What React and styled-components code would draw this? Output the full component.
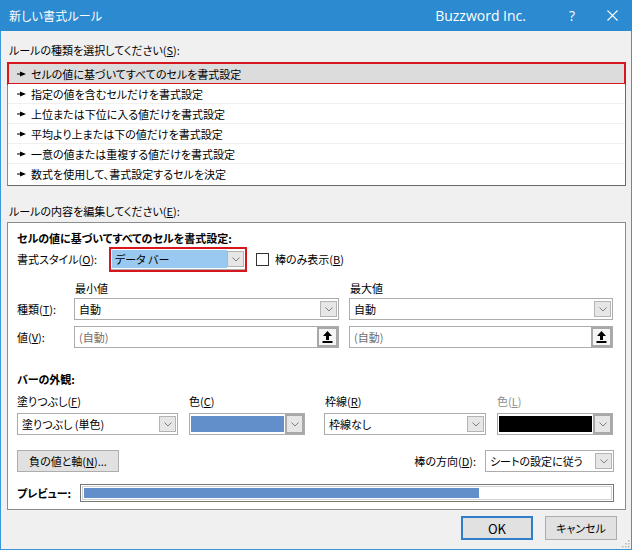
import styled, { createGlobalStyle } from "styled-components";

const GlobalStyle = createGlobalStyle`
  body {
    margin: 0;
    background: #ffffff;
  }
  * {
    box-sizing: border-box;
  }
`;

const Window = styled.div`
  position: relative;
  width: 632px;
  height: 550px;
  display: flex;
  flex-direction: column;
  background: #f0f0f0;
  font-family: "Noto Sans CJK JP", "Noto Sans", sans-serif;
  font-size: 11px;
  font-feature-settings: "palt";
  color: #000;
`;

const TitleBar = styled.div`
  height: 31px;
  flex: none;
  display: flex;
  align-items: center;
  padding-left: 9px;
  background: #2b8ad0;
  color: #fff;
`;

const TitleText = styled.span`
  flex: 1;
  font-size: 12px;
  letter-spacing: 0.2px;
`;

const Brand = styled.span`
  font-family: "Open Sans", "Noto Sans", sans-serif;
  font-size: 14px;
  margin-right: 26px;
`;

const TitleButton = styled.span`
  width: 40px;
  height: 31px;
  display: flex;
  align-items: center;
  justify-content: center;
  font-family: "Open Sans", sans-serif;
  font-size: 14px;
`;

const Body = styled.div`
  flex: 1;
  display: flex;
  flex-direction: column;
  border: 1px solid #3a96d8;
  border-top: none;
  padding: 0 5px 0 6px;
`;

const SectionLabel = styled.div`
  margin-top: ${(p) => p.$mt}px;
  padding-left: 2px;
  line-height: 16px;
`;

const ListBox = styled.div`
  margin-top: 4px;
  padding: 1px 0;
  background: #fff;
  border: 1px solid #8a8a8a;
  border-right-color: #6a6a6a;
  border-bottom-color: #6a6a6a;
`;

const ListItem = styled.div`
  position: relative;
  height: 20px;
  display: flex;
  align-items: center;
  padding-left: 9px;
  background: ${(p) => (p.$selected ? "#dcdcdc" : "#fff")};
  border-bottom: 1px solid #f0f0f0;
  &:last-child {
    border-bottom: none;
  }
  ${(p) =>
    p.$selected &&
    `
    &::after {
      content: "";
      position: absolute;
      left: -1px;
      right: -1px;
      top: -2px;
      bottom: -2px;
      border: 2px solid #d7161e;
    }
  `}
`;

const Pointer = styled.svg`
  width: 9px;
  height: 6px;
  margin-right: 5px;
  flex: none;
`;

const Frame = styled.div`
  margin-top: 3px;
  display: flex;
  flex-direction: column;
  background: #fff;
  border: 1px solid #8c8c8c;
  padding: 7px 11px 7px 9px;
`;

const Heading = styled.div`
  font-weight: bold;
  line-height: 16px;
  margin-top: ${(p) => p.$mt || 0}px;
`;

const Row = styled.div`
  display: flex;
  align-items: center;
  margin-top: ${(p) => p.$mt || 0}px;
`;

const Label = styled.span`
  width: ${(p) => (p.$w ? `${p.$w}px` : "auto")};
  flex: none;
  line-height: 16px;
  padding-left: ${(p) => p.$pl || 0}px;
  color: ${(p) => (p.$disabled ? "#8d8d8d" : "#000")};
  font-weight: ${(p) => (p.$bold ? "bold" : "normal")};
`;

const Combo = styled.div`
  position: relative;
  width: ${(p) => p.$w}px;
  height: 22px;
  flex: none;
  display: flex;
  align-items: stretch;
  margin-left: ${(p) => p.$ml || 0}px;
  padding: 1px;
  background: #fff;
  border: 1px solid #acacac;
  ${(p) =>
    p.$marked &&
    `
    &::after {
      content: "";
      position: absolute;
      left: -2px;
      right: -2px;
      top: -2px;
      bottom: -3px;
      border: 2px solid #d7161e;
    }
  `}
`;

const ComboText = styled.span`
  flex: 1;
  display: flex;
  align-items: center;
  padding-left: 3px;
  background: ${(p) => (p.$highlight ? "#99c9f0" : "transparent")};
  color: ${(p) => (p.$placeholder ? "#6d6d6d" : "#000")};
`;

const Swatch = styled.span`
  flex: 1;
  margin: 1px 1px 1px 0;
  background: ${(p) => p.$color};
`;

const DropButton = styled.span`
  width: 17px;
  flex: none;
  display: flex;
  align-items: center;
  justify-content: center;
  margin: 1px 0;
  background: #e6e6e6;
  border: 1px solid #b4b4b4;
`;

const ColorDrop = styled(DropButton)`
  width: 19px;
  margin: -1px -1px -1px 0;
  border: 2px solid #a8a8a8;
`;

const RefButton = styled.span`
  width: 21px;
  flex: none;
  display: flex;
  align-items: center;
  justify-content: center;
  margin: -1px -1px -1px 0;
  background: #f6f6f6;
  border: 2px solid #a8a8a8;
`;

const CheckBox = styled.span`
  width: 13px;
  height: 13px;
  flex: none;
  margin-left: 10px;
  margin-right: 6px;
  background: #fff;
  border: 1px solid #333;
`;

const Field = styled.div`
  width: ${(p) => p.$w}px;
  margin-left: ${(p) => p.$ml || 0}px;
  flex: none;
  display: flex;
  flex-direction: column;
  gap: 4px;
`;

const PushButton = styled.button`
  width: ${(p) => p.$w}px;
  height: ${(p) => p.$h}px;
  padding: 0;
  font: inherit;
  font-size: ${(p) => (p.$latin ? "13px" : "inherit")};
  color: #000;
  background: #e1e1e1;
  border: ${(p) => (p.$default ? "2px solid #2f7fc8" : "1px solid #adadad")};
`;

const Spacer = styled.span`
  flex: 1;
`;

const PreviewBox = styled.div`
  flex: 1;
  height: 18px;
  padding: 1px;
  background: #fff;
  border: 1px solid #767676;
`;

const PreviewInner = styled.div`
  height: 100%;
  padding: 1px;
  border: 1px solid #d2d2d2;
`;

const PreviewBar = styled.div`
  height: 100%;
  width: ${(p) => p.$pct}%;
  background: #628fc9;
`;

const Footer = styled.div`
  display: flex;
  justify-content: flex-end;
  gap: 12px;
  margin-top: 6px;
  padding-right: 9px;
`;

const Grip = styled.svg`
  position: absolute;
  right: 2px;
  bottom: 2px;
  width: 10px;
  height: 10px;
`;

const Chevron = () => (
  <svg width="8" height="5" viewBox="0 0 8 5">
    <path d="M0.5 0.5 L4 4 L7.5 0.5" fill="none" stroke="#707070" strokeWidth="0.9" />
  </svg>
);

const RefIcon = () => (
  <svg width="11" height="12" viewBox="0 0 11 12">
    <path d="M5.5 0 L10 5 L7 5 L7 9 L4 9 L4 5 L1 5 Z" fill="#000" />
    <rect x="0.5" y="10" width="10" height="2" fill="#000" />
  </svg>
);

const Select = ({ w, ml, children, highlight, marked }) => (
  <Combo $w={w} $ml={ml} $marked={marked}>
    <ComboText $highlight={highlight}>{children}</ComboText>
    <DropButton>
      <Chevron />
    </DropButton>
  </Combo>
);

const RefInput = ({ w, ml, children }) => (
  <Combo $w={w} $ml={ml}>
    <ComboText $placeholder>{children}</ComboText>
    <RefButton>
      <RefIcon />
    </RefButton>
  </Combo>
);

const ColorPicker = ({ w, color }) => (
  <Combo $w={w}>
    <Swatch $color={color} />
    <ColorDrop>
      <Chevron />
    </ColorDrop>
  </Combo>
);

const rules = [
  "セルの値に基づいてすべてのセルを書式設定",
  "指定の値を含むセルだけを書式設定",
  "上位または下位に入る値だけを書式設定",
  "平均より上または下の値だけを書式設定",
  "一意の値または重複する値だけを書式設定",
  "数式を使用して、書式設定するセルを決定",
];

const App = () => {
  return (
    <Window>
      <GlobalStyle />
      <TitleBar>
        <TitleText>新しい書式ルール</TitleText>
        <Brand>Buzzword Inc.</Brand>
        <TitleButton>?</TitleButton>
        <TitleButton>
          <svg width="11" height="11" viewBox="0 0 11 11">
            <path d="M0.5 0.5 L10.5 10.5 M10.5 0.5 L0.5 10.5" stroke="#fff" strokeWidth="1.1" />
          </svg>
        </TitleButton>
      </TitleBar>
      <Body>
        <SectionLabel $mt={11}>
          ルールの種類を選択してください(<u>S</u>):
        </SectionLabel>
        <ListBox>
          {rules.map((r, i) => (
            <ListItem key={r} $selected={i === 0}>
              <Pointer viewBox="0 0 9 6">
                <path d="M0 2.4 H3 V0.5 L9 3 L3 5.5 V3.6 H0 Z" fill="#000" />
              </Pointer>
              {r}
            </ListItem>
          ))}
        </ListBox>

        <SectionLabel $mt={17}>
          ルールの内容を編集してください(<u>E</u>):
        </SectionLabel>
        <Frame>
          <Heading>セルの値に基づいてすべてのセルを書式設定:</Heading>
          <Row $mt={2}>
            <Label $w={93}>
              書式スタイル(<u>O</u>):
            </Label>
            <Select w={136} highlight marked>
              データ バー
            </Select>
            <CheckBox />
            <Label>
              棒のみ表示(<u>B</u>)
            </Label>
          </Row>

          <Row $mt={10}>
            <Label $w={57} />
            <Label $w={275} $pl={1}>
              最小値
            </Label>
            <Label $pl={1}>最大値</Label>
          </Row>
          <Row $mt={2}>
            <Label $w={57}>
              種類(<u>T</u>):
            </Label>
            <Select w={265}>自動</Select>
            <Select w={264} ml={10}>
              自動
            </Select>
          </Row>
          <Row $mt={6}>
            <Label $w={57}>
              値(<u>V</u>):
            </Label>
            <RefInput w={265}>(自動)</RefInput>
            <RefInput w={264} ml={10}>
              (自動)
            </RefInput>
          </Row>

          <Heading $mt={23}>バーの外観:</Heading>
          <Row $mt={6}>
            <Field $w={161}>
              <Label>
                塗りつぶし(<u>F</u>)
              </Label>
              <Select w={161}>塗りつぶし (単色)</Select>
            </Field>
            <Field $w={116} $ml={11}>
              <Label>
                色(<u>C</u>)
              </Label>
              <ColorPicker w={116} color="#628fc9" />
            </Field>
            <Field $w={162} $ml={19}>
              <Label $pl={1}>
                枠線(<u>R</u>)
              </Label>
              <Select w={162}>枠線なし</Select>
            </Field>
            <Field $w={116} $ml={11}>
              <Label $disabled>
                色(<u>L</u>)
              </Label>
              <ColorPicker w={116} color="#000" />
            </Field>
          </Row>

          <Row $mt={15}>
            <PushButton $w={102} $h={22}>
              負の値と軸(<u>N</u>)...
            </PushButton>
            <Spacer />
            <Label>
              棒の方向(<u>D</u>):
            </Label>
            <Select w={129} ml={9}>
              シートの設定に従う
            </Select>
          </Row>

          <Row $mt={12}>
            <Label $w={63} $bold>
              プレビュー:
            </Label>
            <PreviewBox>
              <PreviewInner>
                <PreviewBar $pct={75} />
              </PreviewInner>
            </PreviewBox>
          </Row>
        </Frame>

        <Footer>
          <PushButton $w={72} $h={24} $default $latin>
            OK
          </PushButton>
          <PushButton $w={72} $h={24}>
            キャンセル
          </PushButton>
        </Footer>
      </Body>
      <Grip viewBox="0 0 10 10">
        {[
          [8, 2],
          [8, 5],
          [8, 8],
          [5, 5],
          [5, 8],
          [2, 8],
        ].map(([x, y]) => (
          <rect key={`${x}-${y}`} x={x} y={y} width="1.5" height="1.5" fill="#b8b8b8" />
        ))}
      </Grip>
    </Window>
  );
};

export default App;
